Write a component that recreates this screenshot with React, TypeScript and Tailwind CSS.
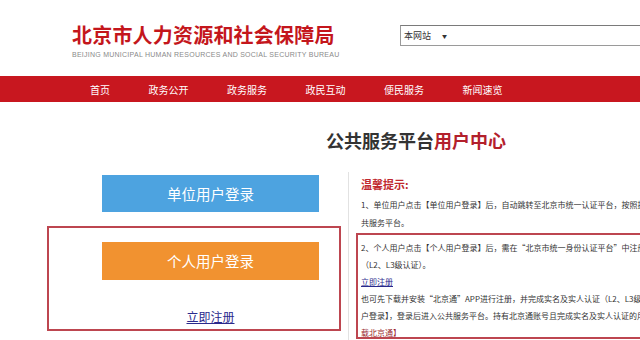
import React from "react";

const cjk = { fontFamily: '"Noto Sans CJK SC", "Noto Sans", sans-serif' };

export default function App() {
  const nav = ["首页", "政务公开", "政务服务", "政民互动", "便民服务", "新闻速览"];
  return (
    <div className="w-[640px] h-[340px] overflow-hidden bg-white" style={cjk}>
      {/* header */}
      <div className="flex h-[76px]">
        <div className="w-[400px] pl-[72px] pt-[25px] shrink-0">
          <div className="text-[20px] leading-[20px] font-bold text-[#c4161c] tracking-[0.2px] whitespace-nowrap">
            北京市人力资源和社会保障局
          </div>
          <div
            className="mt-[6px] text-[7px] leading-[8px] text-[#8a8a8a] tracking-[0.25px] whitespace-nowrap"
            style={{ fontFamily: '"Liberation Sans", Arial, sans-serif' }}
          >
            BEIJING MUNICIPAL HUMAN RESOURCES AND SOCIAL SECURITY BUREAU
          </div>
        </div>
        <div className="mt-[25px] h-[21px] w-[260px] shrink-0 border border-[#9a9a9a] border-t-[#7a7a7a] flex items-center pl-[3px] text-[9px] text-[#333]">
          本网站<span className="ml-[11px] text-[5px]">▼</span>
        </div>
      </div>

      {/* nav */}
      <div className="h-[26px] bg-[#c8171f] flex items-center pl-[90px] gap-[38.5px] text-[10px] text-white">
        {nav.map((n) => (
          <span key={n} className="whitespace-nowrap">{n}</span>
        ))}
      </div>

      {/* heading */}
      <div className="h-[70px] pl-[326px] pt-[29px]">
        <div className="text-[18px] leading-[18px] font-bold text-[#333] whitespace-nowrap">
          公共服务平台<span className="text-[#b3202c]">用户中心</span>
        </div>
      </div>

      {/* columns */}
      <div className="flex">
        <div className="w-[348px] shrink-0">
          <div className="ml-[102px] mt-[3px] w-[217px] h-[37px] bg-[#4da3e0] flex items-center justify-center text-white text-[14.5px]">
            单位用户登录
          </div>
          <div className="ml-[47px] mt-[14px] w-[294px] h-[105px] border-2 border-[#bd4650]">
            <div className="ml-[53px] mt-[14px] w-[217px] h-[38px] bg-[#f19230] flex items-center justify-center text-white text-[14.5px]">
              个人用户登录
            </div>
            <div className="ml-[53px] w-[217px] mt-[30px] text-center text-[12px] leading-[14px]">
              <span className="text-[#2a2a8c] underline">立即注册</span>
            </div>
          </div>
        </div>

        <div className="flex-1 h-[170px] border-l border-[#e2e2e2] pl-[7px] pt-[4px] text-[8px] text-[#333] whitespace-nowrap">
          <div className="pl-[5px] text-[11px] leading-[16px] font-bold text-[#c0282e]">温馨提示:</div>
          <div className="pl-[5px] mt-[4px] leading-[18px]">
            <div>1、单位用户点击【单位用户登录】后，自动跳转至北京市统一认证平台，按照提示完成登录后进入公</div>
            <div>共服务平台。</div>
          </div>
          <div className="mt-[1px] w-[300px] h-[106px] border-2 border-[#bd4650] pl-[3px] pt-[4px] leading-[17px] overflow-hidden">
            <div>2、个人用户点击【个人用户登录】后，需在“北京市统一身份认证平台”中注册并完成实名认证</div>
            <div>（L2、L3级认证）。</div>
            <div><span className="text-[#2a2a8c] underline">立即注册</span></div>
            <div>也可先下载并安装“北京通”APP进行注册，并完成实名及实人认证（L2、L3级认证）后，点击【个人用</div>
            <div>户登录】，登录后进入公共服务平台。持有北京通账号且完成实名及实人认证的用户可直接点击【下</div>
            <div className="text-[#9a1f2e]">载北京通】</div>
          </div>
        </div>
      </div>
    </div>
  );
}
